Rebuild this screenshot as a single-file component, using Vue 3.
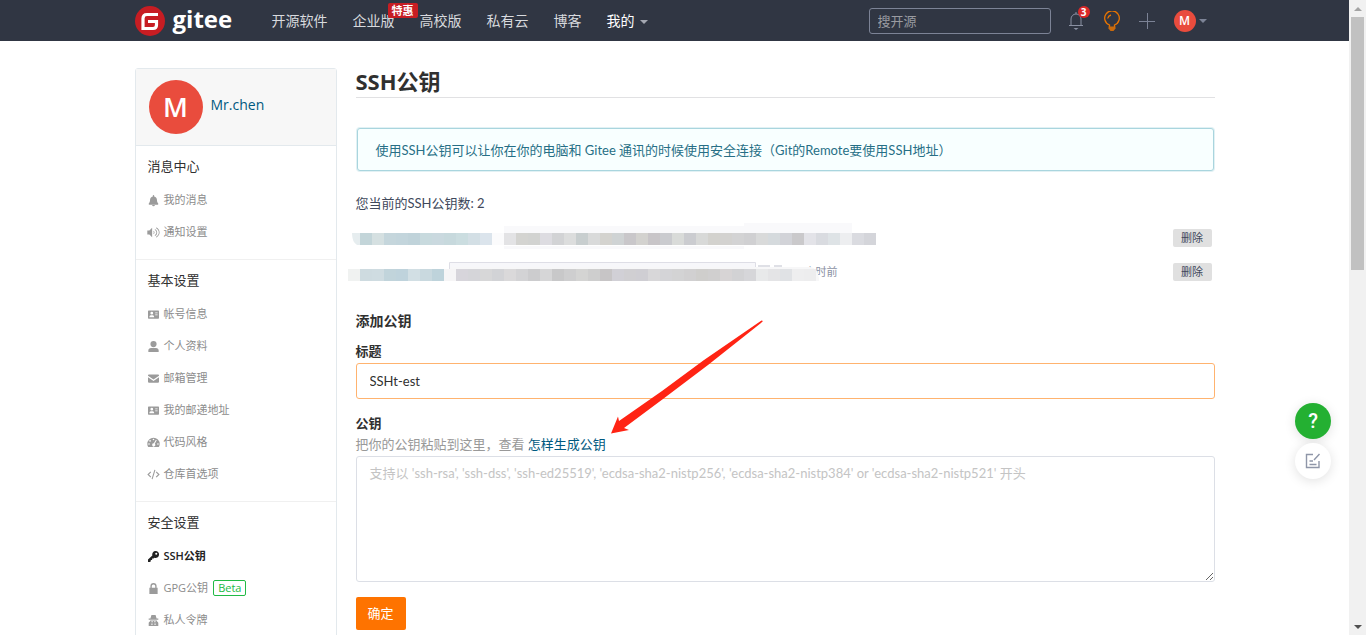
<script setup>
import { ref } from 'vue'

const title = ref('SSHt-est')
const publicKey = ref('')
const search = ref('')

const nav = [
  { label: '开源软件' },
  { label: '企业版', badge: '特惠' },
  { label: '高校版' },
  { label: '私有云' },
  { label: '博客' },
  { label: '我的', menu: true, active: true }
]

const icons = {
  bell: 'M8 0a1 1 0 0 1 1 1v1c2.600.5 4 2.500 4 5 0 3 .8 4.200 1.800 5.200.6.700.2 1.800-.8 1.800H2c-1 0-1.400-1.100-.8-1.800C2.200 11.200 3 10 3 7c0-2.500 1.400-4.500 4-5V1a1 1 0 0 1 1-1zM6 14.500h4a2 2 0 0 1-4 0z',
  volume: 'M-1 5h3l4-4v14l-4-4h-3zM8 5.500c2 1.200 2 3.800 0 5v-1.600c.8-.6.8-1.200 0-1.800zM10 2.800c4.500 2 4.500 8.400 0 10.400v-1.600c3-1.500 3-5.700 0-7.200zM12 .5c6.500 3 6.500 12 0 15v-1.700c5-2.600 5-9 0-11.600z',
  card: 'M1 2h14a1 1 0 0 1 1 1v10a1 1 0 0 1-1 1H1a1 1 0 0 1-1-1V3a1 1 0 0 1 1-1zM5.500 4a2 2 0 1 0 0 4 2 2 0 0 0 0-4zM2 12h7c0-2-1-3-2-3H4c-1 0-2 1-2 3zM10.500 5v1H14V5zM10.500 8v1H14V8z',
  user: 'M8 0a4.500 4.500 0 1 1 0 9 4.500 4.500 0 0 1 0-9zM4.500 10h7c2.500 0 4 1.500 4 3.500V16H.5v-2.500c0-2 1.500-3.500 4-3.500z',
  mail: 'M1 2h14l1 1v1L8 9.500 0 4V3zM0 6l8 5.500L16 6v7l-1 1H1l-1-1z',
  gauge: 'M8 1a9 9 0 0 1 9 9c0 2-.5 3.500-1.300 4.500H.3C-.5 13.500-1 12-1 10a9 9 0 0 1 9-9zM8 2.500a1.200 1.200 0 1 0 0 2.400 1.200 1.200 0 0 0 0-2.400zM3 4.500a1.200 1.200 0 1 0 0 2.400 1.200 1.200 0 0 0 0-2.400zM1.500 9a1.200 1.200 0 1 0 0 2.400 1.200 1.200 0 0 0 0-2.400zM14.500 9a1.200 1.200 0 1 0 0 2.400 1.200 1.200 0 0 0 0-2.400zM11.500 4l-3 5.200a2.300 2.300 0 1 0 1.400.6l2.800-5z',
  code: 'M3.500 3.500l1.200 1.200L1.400 8l3.300 3.300-1.200 1.200L-1 8zM12.500 3.500l-1.200 1.200L14.600 8l-3.300 3.300 1.200 1.200L17 8zM9.300 1l1.500.5L6.700 15l-1.500-.5z',
  key: 'M11 0a5 5 0 1 1-1.600 9.700L8 11H6v2H4v2l-1 1H0v-3.500l6.300-6A5 5 0 0 1 11 0zM12 2.500a1.500 1.500 0 1 0 0 3 1.500 1.500 0 0 0 0-3z',
  lock: 'M3.500 7V4.500a4.500 4.500 0 0 1 9 0V7H14v9H2V7zM5.500 7h5V4.500a2.500 2.500 0 0 0-5 0z',
  agent: 'M5 0h6l1.500 5H15v1.800H1V5h2.500zM3 8h10v1.500c1.500.5 2 1.500 2 3V16H1v-3.500c0-1.500.5-2.500 2-3zM5 9v1.500h2V9zM9 9v1.500h2V9zM5 12.500v2h1.500v-2zM9.500 12.500v2H11v-2z'
}

const groups = [
  { title: '消息中心', items: [
    { icon: 'bell', label: '我的消息' },
    { icon: 'volume', label: '通知设置' }
  ] },
  { title: '基本设置', items: [
    { icon: 'card', label: '帐号信息' },
    { icon: 'user', label: '个人资料' },
    { icon: 'mail', label: '邮箱管理' },
    { icon: 'card', label: '我的邮递地址' },
    { icon: 'gauge', label: '代码风格' },
    { icon: 'code', label: '仓库首选项' }
  ] },
  { title: '安全设置', items: [
    { icon: 'key', label: 'SSH公钥', active: true },
    { icon: 'lock', label: 'GPG公钥', tag: 'Beta' },
    { icon: 'agent', label: '私人令牌' }
  ] }
]

const firstRow = '#c3d5d9 #d5e0e1 #c5d6dc #c3d5dc #c0d3da #c8dade #cad9df #c7d9dd #cbdde0 #d3dfe5 #dbe4ec #fbfbfc #e3e3e5 #d4d4d1 #d2d3d1 #dddce1 #d2d3d5 #dcdddd #c8cecf #d9dada #d4d3cf #cfd3d4 #c9c7ca #d3d2cf #c8c5c8 #cacbcf #d9dbd9 #cbccd0 #d8d9d8 #d3d2ce #d3d2d0 #d3d3d4 #d0d0d2 #d9dada #d5dadd #d2d3d8 #cac9cb #e3e3e8 #d9dbe0 #dee3e6 #edeef0 #dadbe0 #d4d5da'.split(' ')
const secondRow = '#f0f2f1 #cedbe0 #cfdce1 #c1d4db #bfd3dc #d2dfe4 #c9d9df #bed3db #f6f5f6 #d7d5db #d5d5d9 #d7d7d8 #d2d3d6 #dad9da #d3d3d5 #ccccce #d6d6d7 #c8c8c9 #cececf #d4d4d3 #cecece #c7c5c6 #d1d0d6 #d0cfd2 #cfced3 #d8d7d9 #d4d4d7 #d3d3d4 #d1d0d1 #cfcecc #d0cfcf #d7d4d5 #d2d2d4 #d6d6d9 #e8e9ea #e4e4e6 #e0e2e5 #eeeeef #ededee'.split(' ')
</script>

<template>
  <div class="page">
    <header class="topbar">
      <div class="container topbar-inner">
        <a class="logo" href="#" aria-label="gitee">
          <svg width="30" height="30" viewBox="0 0 30 30" aria-hidden="true">
            <circle cx="15" cy="15" r="15" fill="#c71d23" />
            <path d="M23 8.500H12Q8 8.500 8 12.500V22.500H18Q21.500 22.500 21.500 19V15.500H13" fill="none" stroke="#fff" stroke-width="3.200" />
          </svg>
          <span>gitee</span>
        </a>
        <nav class="nav">
          <a v-for="n in nav" :key="n.label" href="#" :class="{ active: n.active }">
            {{ n.label }}<i v-if="n.menu" class="caret"></i>
            <b v-if="n.badge" class="promo">{{ n.badge }}</b>
          </a>
        </nav>
        <div class="tools">
          <input v-model="search" class="search" type="text" placeholder="搜开源" aria-label="搜开源">
          <button class="tool bell" type="button" aria-label="通知">
            <svg width="16" height="20" viewBox="0 0 16 20" fill="none" stroke="#8a91a3">
              <path d="M1 14.500h14M3 14.500V8a5 5 0 0 1 10 0v6.500M8 1v2" /><path d="M5.500 17h5L8 19z" fill="#8a91a3" stroke="none" />
            </svg>
            <b>3</b>
          </button>
          <button class="tool bulb" type="button" aria-label="提示">
            <svg width="16" height="20" viewBox="0 0 16 20" fill="none" stroke="#e87400" stroke-width="1.300">
              <path d="M5.500 16v-2A7.300 7.300 0 1 1 10.500 14v2M3.700 7.500A4.500 4.500 0 0 1 7 4" />
              <path d="M4.500 15.500h7v2L9.500 20h-3L4.500 17.500z" fill="#c96a0c" stroke="none" />
            </svg>
          </button>
          <button class="tool plus" type="button" aria-label="新建">
            <svg width="16" height="16" viewBox="0 0 16 16" stroke="#7c8396"><path d="M0 8.500h16M8.500 0v16" /></svg>
          </button>
          <button class="tool account" type="button"><span>M</span><i class="caret"></i></button>
        </div>
      </div>
    </header>

    <div class="container layout">
      <aside class="sidebar">
        <div class="profile">
          <span class="avatar">M</span><a href="#">Mr.chen</a>
        </div>
        <section v-for="g in groups" :key="g.title" class="group">
          <h2>{{ g.title }}</h2>
          <a v-for="i in g.items" :key="i.label" href="#" class="item" :class="{ active: i.active }">
            <svg width="11" height="11" viewBox="0 0 16 16" aria-hidden="true"><path :d="icons[i.icon]" fill="currentColor" fill-rule="evenodd" /></svg>
            <span>{{ i.label }}</span>
            <em v-if="i.tag">{{ i.tag }}</em>
          </a>
        </section>
      </aside>

      <main>
        <h1>SSH公钥</h1>
        <p class="notice">使用SSH公钥可以让你在你的电脑和 Gitee 通讯的时候使用安全连接（Git的Remote要使用SSH地址）</p>
        <p class="count">您当前的SSH公钥数: 2</p>
        <div class="keys">
          <div class="key"><button type="button">删除</button></div>
          <div class="key"><span class="age">小时前</span><button type="button">删除</button></div>
          <svg class="mask" width="540" height="64" viewBox="0 0 540 64" aria-hidden="true">
            <path d="M156 4H396V1H504V12H156zM156 24H396V27H156z" fill="#f9f9fb" />
            <path d="M4 11h8v12H9q-5-3-5-12z" fill="#e6edef" />
            <rect v-for="(c, i) in firstRow" :key="'a' + i" :x="12 + i * 12" y="11" width="12" height="12" :fill="c" />
            <path d="M101.500 47V40.500H407.500V47" fill="#f7f7fa" stroke="#dedee6" />
            <path d="M410 43h12v2h-12zM426 43h8v2h-8z" fill="#dfe0e6" />
            <path d="M102 45H462q9 1 9 14H102z" fill="#f7f7f8" />
            <rect v-for="(c, i) in secondRow" :key="'b' + i" :x="i * 12" y="47" width="12" height="12" :fill="c" />
          </svg>
        </div>

        <form @submit.prevent>
          <h3>添加公钥</h3>
          <label for="key-title">标题</label>
          <input id="key-title" v-model="title" class="field" type="text">
          <label for="key-body" class="key-label">公钥</label>
          <p class="hint">把你的公钥粘贴到这里，查看 <a href="#">怎样生成公钥</a></p>
          <textarea id="key-body" v-model="publicKey" placeholder="支持以 'ssh-rsa', 'ssh-dss', 'ssh-ed25519', 'ecdsa-sha2-nistp256', 'ecdsa-sha2-nistp384' or 'ecdsa-sha2-nistp521' 开头"></textarea>
          <button class="submit" type="submit">确定</button>
          <svg class="arrow" width="152" height="114" viewBox="0 0 152 114" aria-hidden="true">
            <path d="M0 113.500L7 96.500L8 101L51 71L93 40L150.500 0.500L152 1L150 3L97 45L52 79L13 108L18 110z" fill="#ff2414" />
          </svg>
        </form>
      </main>
    </div>

    <div class="floating">
      <button class="help" type="button">?</button>
      <button class="feedback" type="button" aria-label="反馈">
        <svg width="16" height="16" viewBox="0 0 16 16" fill="none" stroke="#8f96a8" stroke-width="1.400"><path d="M8 1.500H1.500V14.500H14V8M14.500 1L9 7M4.500 8H8M4.500 11.500H11.500" /></svg>
      </button>
    </div>
    <div class="scrollbar" aria-hidden="true"><i class="up"></i><i class="thumb"></i><i class="down"></i></div>
  </div>
</template>

<style>
body { margin: 0; }
</style>

<style scoped>
.page, .page * { box-sizing: border-box; }
.page {
  position: relative;
  height: 100vh;
  overflow: hidden;
  padding-right: 17px;
  background: #fff;
  color: #40485b;
  font: 13px/20px "Open Sans", "Noto Sans CJK SC", sans-serif;
}
a { color: inherit; text-decoration: none; }
button { border: 0; padding: 0; font: inherit; cursor: pointer; }
h1, h2, h3, p { margin: 0; }
.container { max-width: 1080px; margin: 0 auto; }
.caret { display: inline-block; border: 4px solid transparent; border-top-color: #a4a8b2; border-bottom: 0; }

.topbar { background: #303643; }
.topbar-inner { display: flex; align-items: center; height: 41px; padding-right: 8px; }
.logo { display: flex; gap: 8px; width: 137px; color: #fff; }
.logo span { font-size: 24px; font-weight: 700; line-height: 26px; }
.nav { display: flex; gap: 25px; font-size: 14px; color: #d8dade; }
.nav a { position: relative; white-space: nowrap; }
.nav .active { color: #fff; }
.nav .caret { margin-left: 5px; vertical-align: middle; }
.promo {
  position: absolute;
  top: -8px;
  left: 35px;
  padding: 0 4px;
  border-radius: 2px;
  background: #c71d23;
  color: #fff;
  font-size: 11px;
  line-height: 15px;
}
.tools { display: flex; align-items: center; margin-left: auto; }
.search {
  width: 182px;
  height: 26px;
  margin-right: 17px;
  padding: 0 8px;
  border: 1px solid #7c8396;
  border-radius: 3px;
  background: transparent;
  color: #fff;
  font: inherit;
}
.search::placeholder { color: #999ba1; opacity: 1; }
.tool { position: relative; display: flex; align-items: center; background: none; }
.bell b {
  position: absolute;
  top: -5px;
  right: -6px;
  width: 12px;
  border-radius: 6px;
  background: #db2828;
  color: #fff;
  font-size: 10px;
  line-height: 12px;
}
.bulb { margin-left: 20px; }
.plus { margin-left: 19px; }
.account { gap: 3px; margin-left: 19px; }
.account span { width: 22px; border-radius: 11px; background: #e94c3d; color: #fff; font-size: 12px; font-weight: 600; line-height: 22px; }
.account .caret { border-top-color: #7c8396; }

.layout { display: grid; grid-template-columns: 202px minmax(0, 1fr); gap: 19px; padding-top: 27px; }
.sidebar { border: 1px solid #e3e9ed; border-radius: 3px; }
.profile { display: flex; align-items: center; gap: 8px; height: 77px; padding-left: 13px; border-bottom: 1px solid #e3e9ed; background: #f7f7f7; }
.avatar { width: 54px; border-radius: 27px; background: #e94c3d; color: #fff; font-size: 27px; font-weight: 600; line-height: 54px; text-align: center; }
.profile a { padding-bottom: 4px; color: #005980; font-size: 14px; }
.group { padding: 7px 12px 11px; border-bottom: 1px solid #f0f0f0; }
.group h2 { margin-bottom: 5px; color: #303030; font-size: 13px; font-weight: 400; line-height: 26px; }
.item { display: flex; align-items: center; gap: 5px; height: 32px; color: #8c8c8c; font-size: 11px; }
.item svg { overflow: visible; color: #9b9b9b; }
.item.active, .item.active svg { color: #222; font-weight: 600; }
.item em { padding: 0 4px; border: 1px solid #21ba45; border-radius: 2px; color: #21ba45; font-style: normal; line-height: 14px; }

main { font-family: Lato, "Noto Sans CJK SC", sans-serif; }
h1 { padding-bottom: 3px; border-bottom: 1px solid #e1e1e3; color: #303030; font-family: "Open Sans", "Noto Sans CJK SC", sans-serif; font-size: 22px; font-weight: 700; line-height: 26px; }
.notice {
  margin: 30px 1px 22px;
  padding: 11px 18px 10px;
  border: 1px solid #a9d5de;
  border-radius: 3px;
  box-shadow: 0 0 0 1px #e2f1f4;
  background: #f8ffff;
  color: #276f86;
}
.keys { position: relative; margin-top: 8px; }
.key { display: flex; align-items: center; height: 34px; padding-right: 3px; }
.key button { width: 39px; margin-left: auto; border-radius: 2px; background: #e0e0e0; color: #40485b; font-size: 11px; line-height: 18px; }
.age { margin-left: 449px; color: #8c92a4; font-size: 11px; }
.mask { position: absolute; top: 1px; left: -8px; }

form { position: relative; margin-top: 22px; color: #303030; }
h3 { margin-bottom: 10px; font-size: 14px; font-weight: 700; line-height: 20px; }
label { display: block; margin-bottom: 2px; font-weight: 700; }
.key-label { margin: 14px 0 1px; }
.field, textarea {
  display: block;
  width: 100%;
  padding: 0 13px;
  border: 1px solid #dcdfe6;
  border-radius: 3px;
  background: #fff;
  color: #303030;
  font: inherit;
  outline: 0;
}
.field { height: 36px; border-color: #ffb36f; }
textarea { height: 126px; padding-top: 6px; resize: both; }
textarea::placeholder { color: #c4c4c4; opacity: 1; }
.hint { margin-bottom: 2px; color: #999; }
.hint a { color: #005980; }
.submit { width: 50px; margin-top: 15px; border-radius: 2px; background: #fe7300; color: #fff; line-height: 33px; }
.arrow { position: absolute; top: 9px; left: 255px; }

.floating { position: absolute; right: 35px; bottom: 156px; display: grid; gap: 4px; }
.floating button { display: grid; place-items: center; width: 36px; height: 36px; border-radius: 50%; box-shadow: 0 2px 12px rgba(0, 0, 0, .12); }
.floating .help { background: #24b032; color: #fff; font-family: Roboto, sans-serif; font-size: 20px; font-weight: 500; }
.floating .feedback { background: #fff; }

.scrollbar { position: absolute; top: 0; right: 0; bottom: 0; display: flex; flex-direction: column; align-items: center; width: 17px; padding: 7px 0 6px; background: #f1f1f1; }
.up { border: 4px solid transparent; border-top: 0; border-bottom-color: #a3a3a3; }
.thumb { width: 13px; height: 253px; margin: 6px 0 auto; background: #c1c1c1; }
.down { border: 4px solid transparent; border-bottom: 0; border-top-color: #505050; }
</style>
